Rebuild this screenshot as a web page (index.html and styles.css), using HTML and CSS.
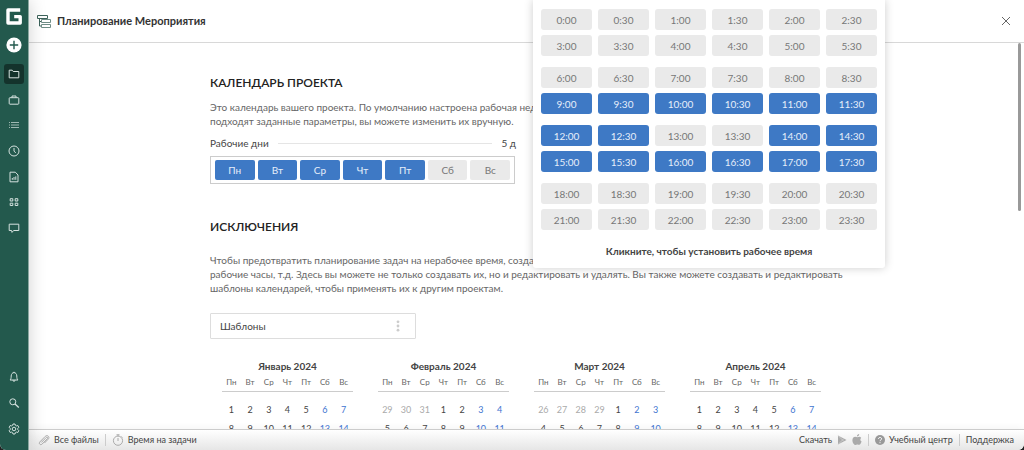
FILE: index.html
```html
<!DOCTYPE html>
<html lang="ru">
<head>
<meta charset="utf-8">
<meta name="viewport" content="width=device-width, initial-scale=1">
<title>Планирование Мероприятия</title>
<link rel="stylesheet" href="styles.css">
<script src="calendar.js" defer></script>
</head>
<body>
<div class="app">
  <nav class="sidebar" aria-label="Главное меню">
    <a class="logo" href="#" aria-label="Главная">
      <svg viewBox="0 0 16 17" width="16" height="17"><path d="M14.200 2H2v13h12.200V8.600H8.200" fill="none" stroke="#fff" stroke-width="3.400" stroke-linejoin="round"/></svg>
    </a>
    <button class="add" type="button" aria-label="Добавить">
      <svg viewBox="0 0 16 16" width="16" height="16"><circle cx="8" cy="8" r="7.600" fill="#fff"/><path d="M8 3.800v8.400M3.800 8h8.400" stroke="#23594d" stroke-width="1.400"/></svg>
    </button>
    <div class="nav-list nav-main">
      <button class="nav-item active" type="button" aria-label="Проекты"><svg class="icon" viewBox="0 0 12 12"><path d="M1.200 2.200h3l1 1.300h5.600v6.300H1.200z"/></svg></button>
      <button class="nav-item" type="button" aria-label="Портфели"><svg class="icon" viewBox="0 0 12 12"><rect x="1.200" y="3.700" width="9.600" height="6.500" rx=".8"/><path d="M4 3.700V2h4v1.700"/></svg></button>
      <button class="nav-item" type="button" aria-label="Задачи"><svg class="icon thin" viewBox="0 0 12 12"><path d="M1 3.500h1M3 3.500H11M1 6h1M3 6H11M1 8.500h1M3 8.500H11"/></svg></button>
      <button class="nav-item" type="button" aria-label="Время"><svg class="icon" viewBox="0 0 12 12"><circle cx="6" cy="6" r="5"/><path d="M6 3v3.200l1.800 1.600"/></svg></button>
      <button class="nav-item" type="button" aria-label="Отчёты"><svg class="icon" viewBox="0 0 12 12"><path d="M2 1.200h5.300L10 4v6.800H2zM4.300 8.800V7M6 8.800V6M7.800 8.800V5.400"/></svg></button>
      <button class="nav-item" type="button" aria-label="Панель"><svg class="icon" viewBox="0 0 12 12"><path d="M2.200 2.700h2.600v2.300H2.200zM7.200 2.700h2.600v2.300H7.200zM2.200 7.200h2.600v2.300H2.200zM7.200 7.200h2.600v2.300H7.200z"/></svg></button>
      <button class="nav-item" type="button" aria-label="Комментарии"><svg class="icon" viewBox="0 0 12 12"><path d="M1.200 2.200h9.600v6.300H5.600L4 10.400 3.600 8.500H1.200z"/></svg></button>
    </div>
    <div class="nav-list">
      <button class="nav-item" type="button" aria-label="Уведомления"><svg class="icon" viewBox="0 0 12 12"><path d="M2 9c1-1 1.200-2 1.200-4C3.200 3 4.400 1.600 6 1.600S8.800 3 8.800 5c0 2 .2 3 1.200 4zM5 9.200c0 1.600 2 1.600 2 0M6 .8v.8"/></svg></button>
      <button class="nav-item" type="button" aria-label="Поиск"><svg class="icon" viewBox="0 0 12 12"><circle cx="4.800" cy="4.800" r="3"/><path d="M7 7l3.800 3.500" stroke-width="1.300"/></svg></button>
      <button class="nav-item" type="button" aria-label="Настройки"><svg class="icon" viewBox="0 0 12 12"><path d="M5 1h2l.4 1.300 1 .6 1.400-.4 1 1.800-1 1v1.400l1 1-1 1.800-1.400-.4-1 .6L7 11H5l-.4-1.300-1-.6-1.400.4-1-1.800 1-1V5.300l-1-1 1-1.800 1.400.4 1-.6z"/><circle cx="6" cy="6" r="1.800"/></svg></button>
    </div>
  </nav>

  <div class="page">
    <header class="header">
      <svg class="header-icon" viewBox="0 0 14 13" width="14" height="13"><path d="M.5.500h10v3H.500zM2.500 3.500v7.500h2M2.500 6.500h2"/><path class="bars" d="M4.500 4.500h9v3h-9zM4.500 9.500h9v3h-9z"/></svg>
      <h1 class="title">Планирование Мероприятия</h1>
      <button class="close" type="button" aria-label="Закрыть"><svg viewBox="0 0 10 10" width="10" height="10"><path d="M1 1l8 8M9 1L1 9" stroke="#666" fill="none"/></svg></button>
    </header>

    <main class="content">
      <div class="column">
        <section>
          <h2 class="section-title">КАЛЕНДАРЬ ПРОЕКТА</h2>
          <p class="text intro">Это календарь вашего проекта. По умолчанию настроена рабочая неделя с 9:00 до 18:00. Если вам не<br>подходят заданные параметры, вы можете изменить их вручную.</p>
          <div class="days-head"><span>Рабочие дни</span><span class="rule"></span><span>5 д</span></div>
          <div class="days" role="group" aria-label="Рабочие дни">
            <button class="slot on" type="button">Пн</button>
            <button class="slot on" type="button">Вт</button>
            <button class="slot on" type="button">Ср</button>
            <button class="slot on" type="button">Чт</button>
            <button class="slot on" type="button">Пт</button>
            <button class="slot" type="button">Сб</button>
            <button class="slot" type="button">Вс</button>
          </div>
        </section>
        <section class="exceptions">
          <h2 class="section-title">ИСКЛЮЧЕНИЯ</h2>
          <p class="text note">Чтобы предотвратить планирование задач на нерабочее время, создайте исключения: праздники,<br>рабочие часы, т.д. Здесь вы можете не только создавать их, но и редактировать и удалять. Вы также можете создавать и редактировать<br>шаблоны календарей, чтобы применять их к другим проектам.</p>
          <button class="templates" type="button"><span>Шаблоны</span><svg viewBox="0 0 4 12" width="4" height="12"><g fill="#ccc"><circle cx="2" cy="1.800" r="1.400"/><circle cx="2" cy="6" r="1.400"/><circle cx="2" cy="10.200" r="1.400"/></g></svg></button>
          <div class="months" id="months"></div>
        </section>
      </div>
      <span class="scroll-thumb"></span>
    </main>

    <footer class="footer">
      <div class="group">
        <a class="foot-link" href="#"><svg class="foot-icon" viewBox="0 0 12 12"><path d="M3.300 8.500l4.900-5c1-1 2.200.2 1.200 1.200l-5.300 5.400C2.500 11.600.300 9.500 1.900 7.900L7.200 2.400C9.400.300 12.300 3 10.200 5.200L6.500 9"/></svg>Все файлы</a>
        <span class="divider"></span>
        <a class="foot-link" href="#"><svg class="foot-icon" viewBox="0 0 12 12"><circle cx="6" cy="6.700" r="4.600"/><path d="M4.500.800h3M6 .8v1.300M6 4v3M9.500 2.500l1 1"/></svg>Время на задачи</a>
      </div>
      <div class="group">
        <span>Скачать</span>
        <a class="store" href="#" aria-label="Google Play"><svg viewBox="0 0 10 10" width="10" height="10"><path d="M1 .5v9L9.500 5z" fill="#aaa"/><path d="M1 .5l6 6M1 9.500l6-6" stroke="#ddd" stroke-width=".6"/></svg></a>
        <a class="store" href="#" aria-label="App Store"><svg viewBox="0 0 10 12" width="10" height="12"><path d="M7.200 0c.1 1.300-1 2.500-2.300 2.500C4.800 1.200 6 .1 7.200 0zM9.200 4C8 4.800 8 6.800 9.600 7.600 9 9.400 8 11 7 11c-.8 0-1-.4-1.800-.4s-1.100.4-1.800.4C2 11 .4 8.400.4 6.200.4 3.900 1.900 2.800 3.200 2.800c.8 0 1.500.5 2 .5s1.200-.5 2.200-.5c.7 0 1.400.4 1.800 1.200z" fill="#aaa"/></svg></a>
        <span class="divider"></span>
        <a class="foot-link" href="#"><svg class="help" viewBox="0 0 10 10" width="10" height="10"><circle cx="5" cy="5" r="5" fill="#999"/><path d="M3.400 4c0-2 3.200-2 3.200-.2C6.600 5 5 4.800 5 6.200M5 7.200v1" fill="none" stroke="#fff"/></svg>Учебный центр</a>
        <span class="divider"></span>
        <a class="foot-link" href="#">Поддержка</a>
      </div>
    </footer>
  </div>

  <div class="popup" role="dialog" aria-label="Рабочее время">
    <div class="hours" id="hours"></div>
    <p class="popup-note">Кликните, чтобы установить рабочее время</p>
  </div>
</div>
</body>
</html>
```
FILE: styles.css
```css
* { box-sizing: border-box; }
body {
  margin: 0;
  background: #222;
  color: #444;
  font: 10px/14px Lato, "Open Sans", sans-serif;
}
button { font: inherit; color: inherit; border: 0; padding: 0; background: none; }
a { color: inherit; text-decoration: none; }
h1, h2, p { margin: 0; }
svg { display: block; flex: none; }

.app {
  position: relative;
  display: flex;
  height: 100vh;
  background: #fff;
  border-radius: 0 0 6px 6px;
  overflow: hidden;
}

.sidebar {
  z-index: 1;
  flex: none;
  display: flex;
  flex-direction: column;
  align-items: center;
  width: 29px;
  padding: 8px 0 11px;
  background: #23594d;
  border-right: 1px solid #8aa69f;
  box-shadow: 0 0 18px rgba(0, 0, 0, 0.18);
}
.add { margin: 12px 0 11px; }
.nav-list { display: flex; flex-direction: column; gap: 6px; }
.nav-main { height: 174px; gap: 0; justify-content: space-between; }
.nav-list:last-child { margin-top: auto; }
.nav-item {
  display: grid;
  place-items: center;
  width: 20px;
  height: 20px;
  border-radius: 3px;
}
.nav-item.active { background: #14332c; }
.icon { width: 12px; height: 12px; fill: none; stroke: #d5e2df; stroke-width: 1; }
.icon.thin { stroke: #9fb9b3; }

.page { flex: 1; min-width: 0; display: flex; flex-direction: column; }
.header {
  flex: none;
  display: flex;
  align-items: center;
  height: 43px;
  padding: 0 13px 0 8px;
  border-bottom: 1px solid #d8d8d8;
}
.header-icon { fill: none; stroke: #3d635b; stroke-width: 1; }
.header-icon .bars { stroke: #6f8d87; }
.title { margin-left: 6px; font-size: 11px; font-weight: 700; color: #333; }
.close { margin-left: auto; }

.content { position: relative; flex: 1; min-height: 0; overflow: hidden; }
.scroll-thumb {
  position: absolute;
  top: 0;
  right: 3px;
  width: 3px;
  height: 168px;
  border-radius: 2px;
  background: #999;
}
.column { max-width: 633px; margin: 0 auto; padding-top: 33px; }
.section-title { font-size: 12px; line-height: 14px; font-weight: 600; color: #222; }
.text { color: #666; white-space: nowrap; }
.intro { margin-top: 10px; }
.days-head {
  display: flex;
  align-items: center;
  width: 306px;
  margin-top: 8px;
}
.rule { flex: 1; height: 1px; margin: 0 9px; background: #e5e5e5; }
.days {
  display: flex;
  gap: 3px;
  width: 305px;
  margin-top: 6px;
  padding: 3px 4px;
  border: 1px solid #ccc;
}
.slot {
  flex: 1;
  height: 20px;
  border-radius: 2px;
  background: #eaeaea;
  color: #777;
}
.slot.on { background: #3e79c5; color: #e6eefa; }
.exceptions { margin-top: 36px; }
.note { margin-top: 19px; }
.templates {
  display: flex;
  align-items: center;
  justify-content: space-between;
  width: 206px;
  height: 26px;
  margin-top: 18px;
  padding: 0 15px 0 9px;
  border: 1px solid #ddd;
  border-radius: 1px;
}
.months {
  display: grid;
  grid-template-columns: repeat(4, 131px);
  gap: 25px;
  margin: 20px 12px 0;
}
.month { width: 100%; border-collapse: collapse; table-layout: fixed; text-align: center; }
.month caption { font-weight: 700; }
.month th { height: 18px; padding: 0; font-size: 8px; font-weight: 400; color: #666; border-bottom: 1px solid #ccc; }
.month td { height: 19px; padding: 0; font-size: 9px; }
.month tbody::before { content: ""; display: table-row; height: 9px; }
.month .off { color: #3e74d0; }
.month .other { color: #aaa; }

.footer {
  flex: none;
  display: flex;
  justify-content: space-between;
  height: 21px;
  padding: 0 10px 0 9px;
  border-top: 1px solid #ccc;
  background: linear-gradient(#fff, #e6e6e6);
  box-shadow: 0 0 8px rgba(0, 0, 0, 0.06);
  font-size: 9px;
}
.group { display: flex; align-items: center; }
.foot-link { display: flex; align-items: center; gap: 4px; }
.foot-icon { width: 12px; height: 12px; fill: none; stroke: #aaa; stroke-width: 1; }
.divider { width: 1px; height: 12px; margin: 0 6px; background: #ccc; }
.store { margin-left: 5px; }

.popup {
  position: absolute;
  z-index: 2;
  top: 0;
  left: 533px;
  width: 352px;
  padding: 9px 8px 10px;
  background: #fff;
  border-radius: 0 0 3px 3px;
  box-shadow: 0 0 10px rgba(0, 0, 0, 0.2);
}
.hours { display: grid; gap: 11px; }
.block { display: grid; grid-template-columns: repeat(6, 1fr); gap: 5px 6px; }
.block .slot { height: 21px; border-radius: 3px; }
.popup-note { margin-top: 14px; text-align: center; font-weight: 700; }
```
FILE: calendar.js
```js
const hours = document.getElementById('hours');
for (let start = 0; start < 24; start += 6) {
  const block = document.createElement('div');
  block.className = 'block';
  for (let half = start * 2; half < start * 2 + 12; half++) {
    const hour = Math.floor(half / 2);
    const slot = document.createElement('button');
    slot.type = 'button';
    slot.className = hour >= 9 && hour < 18 && hour !== 13 ? 'slot on' : 'slot';
    slot.textContent = hour + (half % 2 ? ':30' : ':00');
    block.append(slot);
  }
  hours.append(block);
}

const months = document.getElementById('months');
const weekdays = ['Пн', 'Вт', 'Ср', 'Чт', 'Пт', 'Сб', 'Вс'];
['Январь', 'Февраль', 'Март', 'Апрель'].forEach((name, month) => {
  const lead = (new Date(2024, month, 1).getDay() + 6) % 7;
  let html = `<caption>${name} 2024</caption><thead><tr>`;
  html += weekdays.map(day => `<th scope="col">${day}</th>`).join('') + '</tr></thead><tbody>';
  for (let week = 0; week < 5; week++) {
    html += '<tr>';
    for (let day = 0; day < 7; day++) {
      const date = new Date(2024, month, 1 - lead + week * 7 + day);
      const kind = date.getMonth() !== month ? 'other' : day > 4 ? 'off' : '';
      html += `<td class="${kind}">${date.getDate()}</td>`;
    }
    html += '</tr>';
  }
  const table = document.createElement('table');
  table.className = 'month';
  table.innerHTML = html + '</tbody>';
  months.append(table);
});
```
